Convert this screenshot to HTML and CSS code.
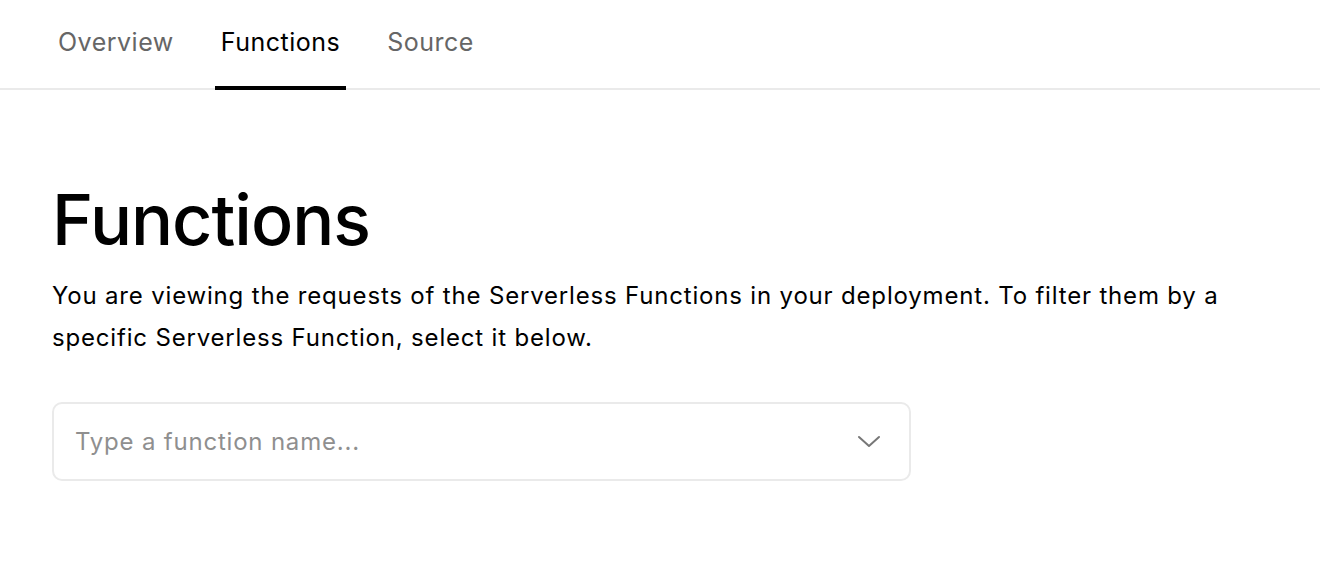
FILE: index.html
```html
<!DOCTYPE html>
<html>
<head>
<meta charset="utf-8">
<link rel="stylesheet" href="styles.css">
</head>
<body>
<nav class="tabs">
  <a class="tab">Overview</a>
  <a class="tab active">Functions</a>
  <a class="tab">Source</a>
</nav>
<main class="content">
  <h1 class="title">Functions</h1>
  <p class="desc">You are viewing the requests of the Serverless Functions in your deployment. To filter them by a specific Serverless Function, select it below.</p>
  <div class="select">
    <span class="placeholder">Type a function name...</span>
    <svg class="chevron" width="24" height="24" viewBox="0 0 24 24" fill="none" stroke="#777" stroke-width="2" stroke-linecap="round" stroke-linejoin="round"><path d="M2 7l10 9 10-9"/></svg>
  </div>
</main>
</body>
</html>
```
FILE: styles.css
```css
* { box-sizing: border-box; }
body {
  margin: 0;
  font-family: Inter, "Noto Sans", sans-serif;
  background: #fff;
  color: #000;
}
.tabs {
  display: flex;
  gap: 35px;
  height: 90px;
  padding: 0 0 0 52px;
  border-bottom: 2px solid #eaeaea;
}
.tab {
  display: flex;
  align-items: center;
  padding: 0 6px 2px;
  font-size: 25px;
  letter-spacing: 0.5px;
  color: #666;
  margin-bottom: -2px;
  border-bottom: 4px solid transparent;
}
.tab.active {
  color: #000;
  border-bottom-color: #000;
}
.content {
  padding: 0 52px;
}
.title {
  margin: 85px 0 0;
  font-size: 70px;
  font-weight: 500;
  line-height: 90px;
  letter-spacing: -1px;
}
.desc {
  margin: 10px 0 0;
  font-size: 24px;
  line-height: 42px;
  letter-spacing: 0.82px;
}
.select {
  margin-top: 43px;
  width: 859px;
  height: 79px;
  border: 2px solid #eaeaea;
  border-radius: 10px;
  display: flex;
  align-items: center;
  justify-content: space-between;
  padding: 0 28px 0 21px;
}
.placeholder {
  font-size: 24px;
  letter-spacing: 0.8px;
  color: #8f8f8f;
}
.chevron { display: block; }
```
